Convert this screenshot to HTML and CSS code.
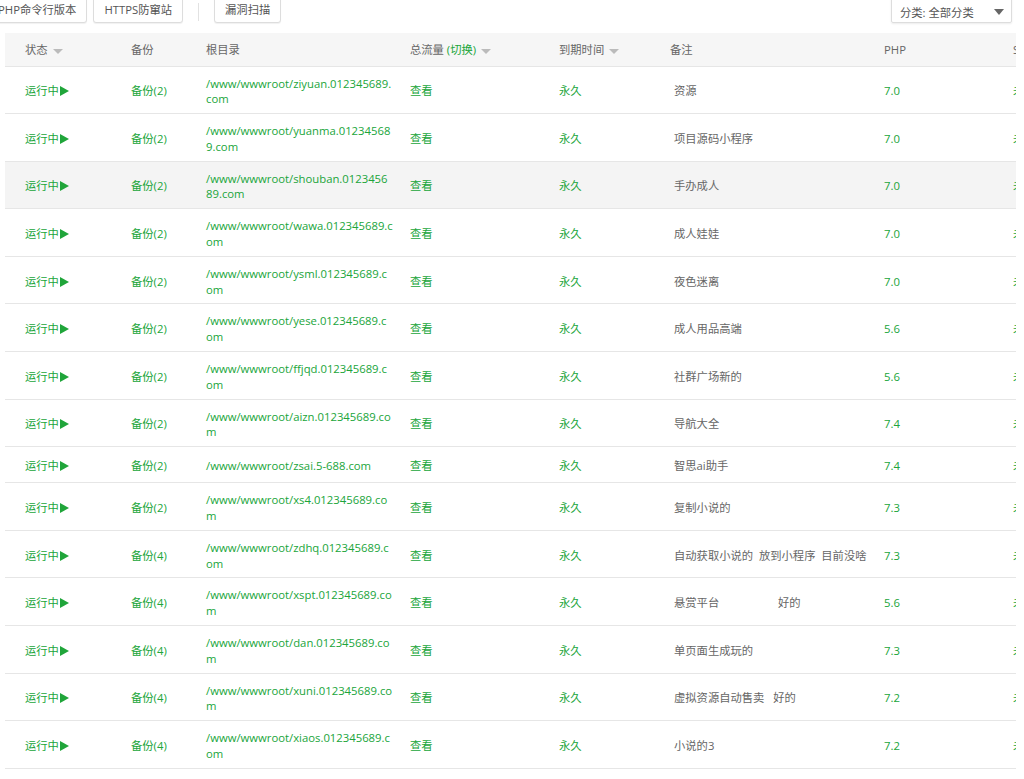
FILE: index.html
```html
<!DOCTYPE html>
<html lang="zh">
<head>
    <meta charset="UTF-8">
    <title>网站</title>
    <link rel="stylesheet" href="styles.css">
</head>
<body>

    <div class="page">
        <div class="toolbar">
            <div class="btns">
                <button class="btn btn-first">PHP命令行版本</button>
                <button class="btn">HTTPS防窜站</button>
                <span class="sep"></span>
                <button class="btn">漏洞扫描</button>
            </div>
            <div class="select">分类: 全部分类<i class="caret"></i></div>
        </div>

        <div class="table-box">
            <table class="site-table">
                <colgroup>
                    <col style="width:111px">
                    <col style="width:75px">
                    <col style="width:204px">
                    <col style="width:149px">
                    <col style="width:111px">
                    <col style="width:214px">
                    <col style="width:129px">
                    <col style="width:120px">
                </colgroup>
                <thead>
                    <tr>
                        <th>状态<i class="sort"></i></th>
                        <th>备份</th>
                        <th>根目录</th>
                        <th>总流量 <span class="green">(切换)</span><i class="sort"></i></th>
                        <th>到期时间<i class="sort"></i></th>
                        <th>备注</th>
                        <th>PHP</th>
                        <th>SSL证书</th>
                    </tr>
                </thead>
                <tbody>
                    <tr>
                        <td class="green">运行中<i class="play"></i></td>
                        <td class="green">备份(2)</td>
                        <td class="path">/www/wwwroot/ziyuan.012345689.<br>com</td>
                        <td class="green">查看</td>
                        <td class="green">永久</td>
                        <td class="remark">资源</td>
                        <td class="green">7.0</td>
                        <td class="green">未部署</td>
                    </tr>
                    <tr>
                        <td class="green">运行中<i class="play"></i></td>
                        <td class="green">备份(2)</td>
                        <td class="path">/www/wwwroot/yuanma.01234568<br>9.com</td>
                        <td class="green">查看</td>
                        <td class="green">永久</td>
                        <td class="remark">项目源码小程序</td>
                        <td class="green">7.0</td>
                        <td class="green">未部署</td>
                    </tr>
                    <tr class="hover">
                        <td class="green">运行中<i class="play"></i></td>
                        <td class="green">备份(2)</td>
                        <td class="path">/www/wwwroot/shouban.0123456<br>89.com</td>
                        <td class="green">查看</td>
                        <td class="green">永久</td>
                        <td class="remark">手办成人</td>
                        <td class="green">7.0</td>
                        <td class="green">未部署</td>
                    </tr>
                    <tr>
                        <td class="green">运行中<i class="play"></i></td>
                        <td class="green">备份(2)</td>
                        <td class="path">/www/wwwroot/wawa.012345689.c<br>om</td>
                        <td class="green">查看</td>
                        <td class="green">永久</td>
                        <td class="remark">成人娃娃</td>
                        <td class="green">7.0</td>
                        <td class="green">未部署</td>
                    </tr>
                    <tr>
                        <td class="green">运行中<i class="play"></i></td>
                        <td class="green">备份(2)</td>
                        <td class="path">/www/wwwroot/ysml.012345689.c<br>om</td>
                        <td class="green">查看</td>
                        <td class="green">永久</td>
                        <td class="remark">夜色迷离</td>
                        <td class="green">7.0</td>
                        <td class="green">未部署</td>
                    </tr>
                    <tr>
                        <td class="green">运行中<i class="play"></i></td>
                        <td class="green">备份(2)</td>
                        <td class="path">/www/wwwroot/yese.012345689.c<br>om</td>
                        <td class="green">查看</td>
                        <td class="green">永久</td>
                        <td class="remark">成人用品高端</td>
                        <td class="green">5.6</td>
                        <td class="green">未部署</td>
                    </tr>
                    <tr>
                        <td class="green">运行中<i class="play"></i></td>
                        <td class="green">备份(2)</td>
                        <td class="path">/www/wwwroot/ffjqd.012345689.c<br>om</td>
                        <td class="green">查看</td>
                        <td class="green">永久</td>
                        <td class="remark">社群广场新的</td>
                        <td class="green">5.6</td>
                        <td class="green">未部署</td>
                    </tr>
                    <tr>
                        <td class="green">运行中<i class="play"></i></td>
                        <td class="green">备份(2)</td>
                        <td class="path">/www/wwwroot/aizn.012345689.co<br>m</td>
                        <td class="green">查看</td>
                        <td class="green">永久</td>
                        <td class="remark">导航大全</td>
                        <td class="green">7.4</td>
                        <td class="green">未部署</td>
                    </tr>
                    <tr>
                        <td class="green">运行中<i class="play"></i></td>
                        <td class="green">备份(2)</td>
                        <td class="path">/www/wwwroot/zsai.5-688.com</td>
                        <td class="green">查看</td>
                        <td class="green">永久</td>
                        <td class="remark">智思ai助手</td>
                        <td class="green">7.4</td>
                        <td class="green">未部署</td>
                    </tr>
                    <tr>
                        <td class="green">运行中<i class="play"></i></td>
                        <td class="green">备份(2)</td>
                        <td class="path">/www/wwwroot/xs4.012345689.co<br>m</td>
                        <td class="green">查看</td>
                        <td class="green">永久</td>
                        <td class="remark">复制小说的</td>
                        <td class="green">7.3</td>
                        <td class="green">未部署</td>
                    </tr>
                    <tr>
                        <td class="green">运行中<i class="play"></i></td>
                        <td class="green">备份(4)</td>
                        <td class="path">/www/wwwroot/zdhq.012345689.c<br>om</td>
                        <td class="green">查看</td>
                        <td class="green">永久</td>
                        <td class="remark">自动获取小说的  放到小程序  目前没啥</td>
                        <td class="green">7.3</td>
                        <td class="green">未部署</td>
                    </tr>
                    <tr>
                        <td class="green">运行中<i class="play"></i></td>
                        <td class="green">备份(4)</td>
                        <td class="path">/www/wwwroot/xspt.012345689.co<br>m</td>
                        <td class="green">查看</td>
                        <td class="green">永久</td>
                        <td class="remark">悬赏平台                    好的</td>
                        <td class="green">5.6</td>
                        <td class="green">未部署</td>
                    </tr>
                    <tr>
                        <td class="green">运行中<i class="play"></i></td>
                        <td class="green">备份(4)</td>
                        <td class="path">/www/wwwroot/dan.012345689.co<br>m</td>
                        <td class="green">查看</td>
                        <td class="green">永久</td>
                        <td class="remark">单页面生成玩的</td>
                        <td class="green">7.3</td>
                        <td class="green">未部署</td>
                    </tr>
                    <tr>
                        <td class="green">运行中<i class="play"></i></td>
                        <td class="green">备份(4)</td>
                        <td class="path">/www/wwwroot/xuni.012345689.co<br>m</td>
                        <td class="green">查看</td>
                        <td class="green">永久</td>
                        <td class="remark">虚拟资源自动售卖   好的</td>
                        <td class="green">7.2</td>
                        <td class="green">未部署</td>
                    </tr>
                    <tr>
                        <td class="green">运行中<i class="play"></i></td>
                        <td class="green">备份(4)</td>
                        <td class="path">/www/wwwroot/xiaos.012345689.c<br>om</td>
                        <td class="green">查看</td>
                        <td class="green">永久</td>
                        <td class="remark">小说的3</td>
                        <td class="green">7.2</td>
                        <td class="green">未部署</td>
                    </tr>
                </tbody>
            </table>
        </div>
    </div>

</body>
</html>
```

FILE: styles.css
```css
* {
    box-sizing: border-box;
}

body {
    margin: 0;
    background: #fff;
    font-family: "Open Sans", "Noto Sans CJK SC", sans-serif;
    font-size: 11.3px;
    color: #666;
    overflow: hidden;
}

.page {
    padding: 0 8px 0 5px;
}

/* 顶部按钮栏 */
.toolbar {
    display: flex;
    justify-content: space-between;
    align-items: center;
    margin-top: -5px;
    height: 28px;
}

.btns {
    display: flex;
    align-items: center;
}

.btn {
    height: 28px;
    padding: 0 10px;
    margin-right: 6px;
    border: 1px solid #ddd;
    border-radius: 3px;
    background: #fff;
    color: #555;
    font-family: inherit;
    font-size: 11.3px;
    box-shadow: 0 1px 1px rgba(0, 0, 0, 0.06);
}

.btn-first {
    margin-left: -18px;
}

.sep {
    width: 1px;
    height: 18px;
    margin: 5px 15px 0 9px;
    background: #e2e2e2;
}

.select {
    display: flex;
    align-items: center;
    width: 121px;
    height: 28px;
    padding: 5px 0 0 8px;
    margin-right: 4px;
    border: 1px solid #ddd;
    border-radius: 2px;
    color: #555;
    box-shadow: 0 1px 2px rgba(0, 0, 0, 0.08);
}

.caret {
    margin-left: auto;
    margin-right: 7px;
    border-top: 6px solid #666;
    border-left: 5px solid transparent;
    border-right: 5px solid transparent;
}

/* 网站列表 */
.table-box {
    margin-top: 10px;
    width: 1011px;
    overflow: hidden;
}

.site-table {
    border-collapse: collapse;
    table-layout: fixed;
    width: 1113px;
}

.site-table th {
    height: 33px;
    padding: 0 0 0 15px;
    background: #f6f6f6;
    border-bottom: 1px solid #e6e6e6;
    font-weight: normal;
    text-align: left;
    color: #666;
    white-space: nowrap;
}

.site-table td {
    padding: 9px 0 6px 15px;
    border-bottom: 1px solid #e6e6e6;
    line-height: 20px;
    vertical-align: middle;
    white-space: nowrap;
}

.site-table th:first-child,
.site-table td:first-child {
    padding-left: 20px;
}

.site-table tr.hover td {
    background: #f4f4f4;
}

.site-table td.path {
    line-height: 15.8px;
    color: #20a53a;
}

.site-table td.remark {
    padding-left: 19px;
    white-space: pre;
    color: #666;
}

.green {
    color: #20a53a;
}

.sort {
    display: inline-block;
    margin-left: 5px;
    vertical-align: middle;
    border-top: 5px solid #bbb;
    border-left: 5px solid transparent;
    border-right: 5px solid transparent;
}

.play {
    display: inline-block;
    margin-left: 1px;
    vertical-align: -1px;
    border-left: 9px solid #20a53a;
    border-top: 5px solid transparent;
    border-bottom: 5px solid transparent;
}
```
